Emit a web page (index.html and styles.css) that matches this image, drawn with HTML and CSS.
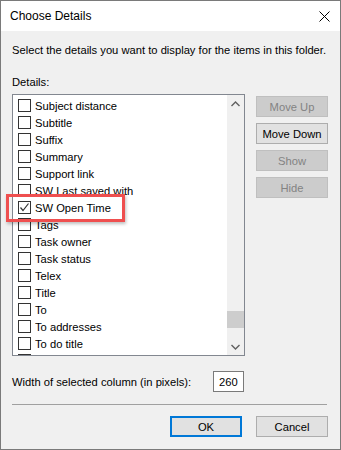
FILE: index.html
```html
<!DOCTYPE html>
<html lang="en">
<head>
  <meta charset="UTF-8">
  <title>Choose Details</title>
  <link rel="stylesheet" href="styles.css">
</head>
<body>
  <div class="dialog">
    <div class="titlebar">
      <span class="title">Choose Details</span>
      <svg class="close" width="11" height="11" viewBox="0 0 11 11">
        <path d="M0.5 0.5 L10.5 10.5 M10.5 0.5 L0.5 10.5" stroke="#000" stroke-width="1" fill="none"/>
      </svg>
    </div>

    <div class="content">
      <p class="intro">Select the details you want to display for the items in this folder.</p>
      <div class="label">Details:</div>

      <div class="main">
        <div class="listbox">
          <ul class="items">
            <li><span class="check"></span>Subject distance</li>
            <li><span class="check"></span>Subtitle</li>
            <li><span class="check"></span>Suffix</li>
            <li><span class="check"></span>Summary</li>
            <li><span class="check"></span>Support link</li>
            <li><span class="check"></span>SW Last saved with</li>
            <li><span class="check checked">
              <svg width="11" height="11" viewBox="0 0 11 11"><path d="M1.5 5.5 L4 8.5 L9.5 1.5" stroke="#333" stroke-width="1.2" fill="none"/></svg>
            </span>SW Open Time</li>
            <li><span class="check"></span>Tags</li>
            <li><span class="check"></span>Task owner</li>
            <li><span class="check"></span>Task status</li>
            <li><span class="check"></span>Telex</li>
            <li><span class="check"></span>Title</li>
            <li><span class="check"></span>To</li>
            <li><span class="check"></span>To addresses</li>
            <li><span class="check"></span>To do title</li>
            <li><span class="check"></span>Total editing time</li>
          </ul>
          <div class="scrollbar">
            <div class="arrow">
              <svg width="9" height="6" viewBox="0 0 9 6"><path d="M0.5 5 L4.5 1 L8.5 5" stroke="#606060" stroke-width="1.4" fill="none"/></svg>
            </div>
            <div class="track"><div class="thumb"></div></div>
            <div class="arrow">
              <svg width="9" height="6" viewBox="0 0 9 6"><path d="M0.5 1 L4.5 5 L8.5 1" stroke="#606060" stroke-width="1.4" fill="none"/></svg>
            </div>
          </div>
        </div>

        <div class="side-buttons">
          <button class="btn" disabled>Move Up</button>
          <button class="btn">Move Down</button>
          <button class="btn" disabled>Show</button>
          <button class="btn" disabled>Hide</button>
        </div>
      </div>

      <div class="width-row">
        <span>Width of selected column (in pixels):</span>
        <input class="px-input" type="text" value="260">
      </div>

      <div class="sep"></div>

      <div class="actions">
        <button class="btn default">OK</button>
        <button class="btn">Cancel</button>
      </div>
    </div>

    <div class="highlight"></div>
  </div>
</body>
</html>
```

FILE: styles.css
```css
body {
  margin: 0;
  font-family: "Liberation Sans", Arial, sans-serif;
  font-size: 11.2px;
  color: #000;
  background: #f0f0f0;
}
.dialog {
  position: relative;
  width: 341px;
  height: 450px;
  box-sizing: border-box;
  border: 1px solid #7a7a7a;
  background: #f0f0f0;
  display: flex;
  flex-direction: column;
}
.titlebar {
  height: 30px;
  flex-shrink: 0;
  background: #fff;
  display: flex;
  align-items: center;
  justify-content: space-between;
  padding: 0 10px 0 9px;
}
.title {
  font-size: 12px;
  line-height: 15px;
  margin-top: 1px;
}
.content {
  padding: 0 12px 0 11px;
  display: flex;
  flex-direction: column;
}
.intro {
  margin: 12px 0 0;
  line-height: 15px;
  white-space: nowrap;
}
.label {
  margin-top: 17px;
  line-height: 15px;
}
.main {
  margin-top: 4px;
  display: flex;
  height: 262px;
}
.listbox {
  width: 233px;
  box-sizing: border-box;
  border: 1px solid #828790;
  background: #fff;
  display: flex;
  overflow: hidden;
}
.items {
  list-style: none;
  margin: 0;
  padding: 2px 0 0 5px;
  flex: 1;
  overflow: hidden;
}
.items li {
  height: 17px;
  display: flex;
  align-items: center;
  white-space: nowrap;
}
.check {
  width: 13px;
  height: 13px;
  box-sizing: border-box;
  border: 1px solid #333;
  background: #fff;
  margin-right: 4px;
  flex-shrink: 0;
  display: flex;
  align-items: center;
  justify-content: center;
}
.scrollbar {
  width: 17px;
  background: #f0f0f0;
  display: flex;
  flex-direction: column;
}
.arrow {
  height: 17px;
  display: flex;
  align-items: center;
  justify-content: center;
}
.track {
  flex: 1;
  display: flex;
  flex-direction: column;
}
.thumb {
  height: 17px;
  background: #cdcdcd;
  margin-top: auto;
  margin-bottom: 10px;
}
.side-buttons {
  margin-left: 11px;
  padding-top: 2px;
  display: flex;
  flex-direction: column;
  gap: 6px;
}
.btn {
  width: 72px;
  height: 21px;
  box-sizing: border-box;
  border: 1px solid #adadad;
  background: #e1e1e1;
  font-family: inherit;
  font-size: 11.2px;
  color: #000;
  padding: 0;
}
.btn:disabled {
  background: #cccccc;
  border-color: #bfbfbf;
  color: #838383;
}
.btn.default {
  border: 2px solid #0078d7;
}
.width-row {
  margin-top: 15px;
  width: 233px;
  display: flex;
  align-items: center;
  justify-content: space-between;
}
.px-input {
  width: 31px;
  height: 21px;
  box-sizing: border-box;
  border: 1px solid #7a7a7a;
  background: #fff;
  font-family: inherit;
  font-size: 11.2px;
  padding: 0 0 0 5px;
  margin-right: 1px;
}
.sep {
  margin-top: 12px;
  margin-right: 1px;
  height: 1px;
  background: #a0a0a0;
}
.actions {
  margin-top: 11px;
  display: flex;
  justify-content: flex-end;
  gap: 14px;
}
.highlight {
  position: absolute;
  left: 5px;
  top: 193px;
  width: 119px;
  height: 28px;
  box-sizing: border-box;
  border: 3px solid #ef4f4f;
  box-shadow: 1px 2px 3px rgba(0,0,0,0.25);
}
```
